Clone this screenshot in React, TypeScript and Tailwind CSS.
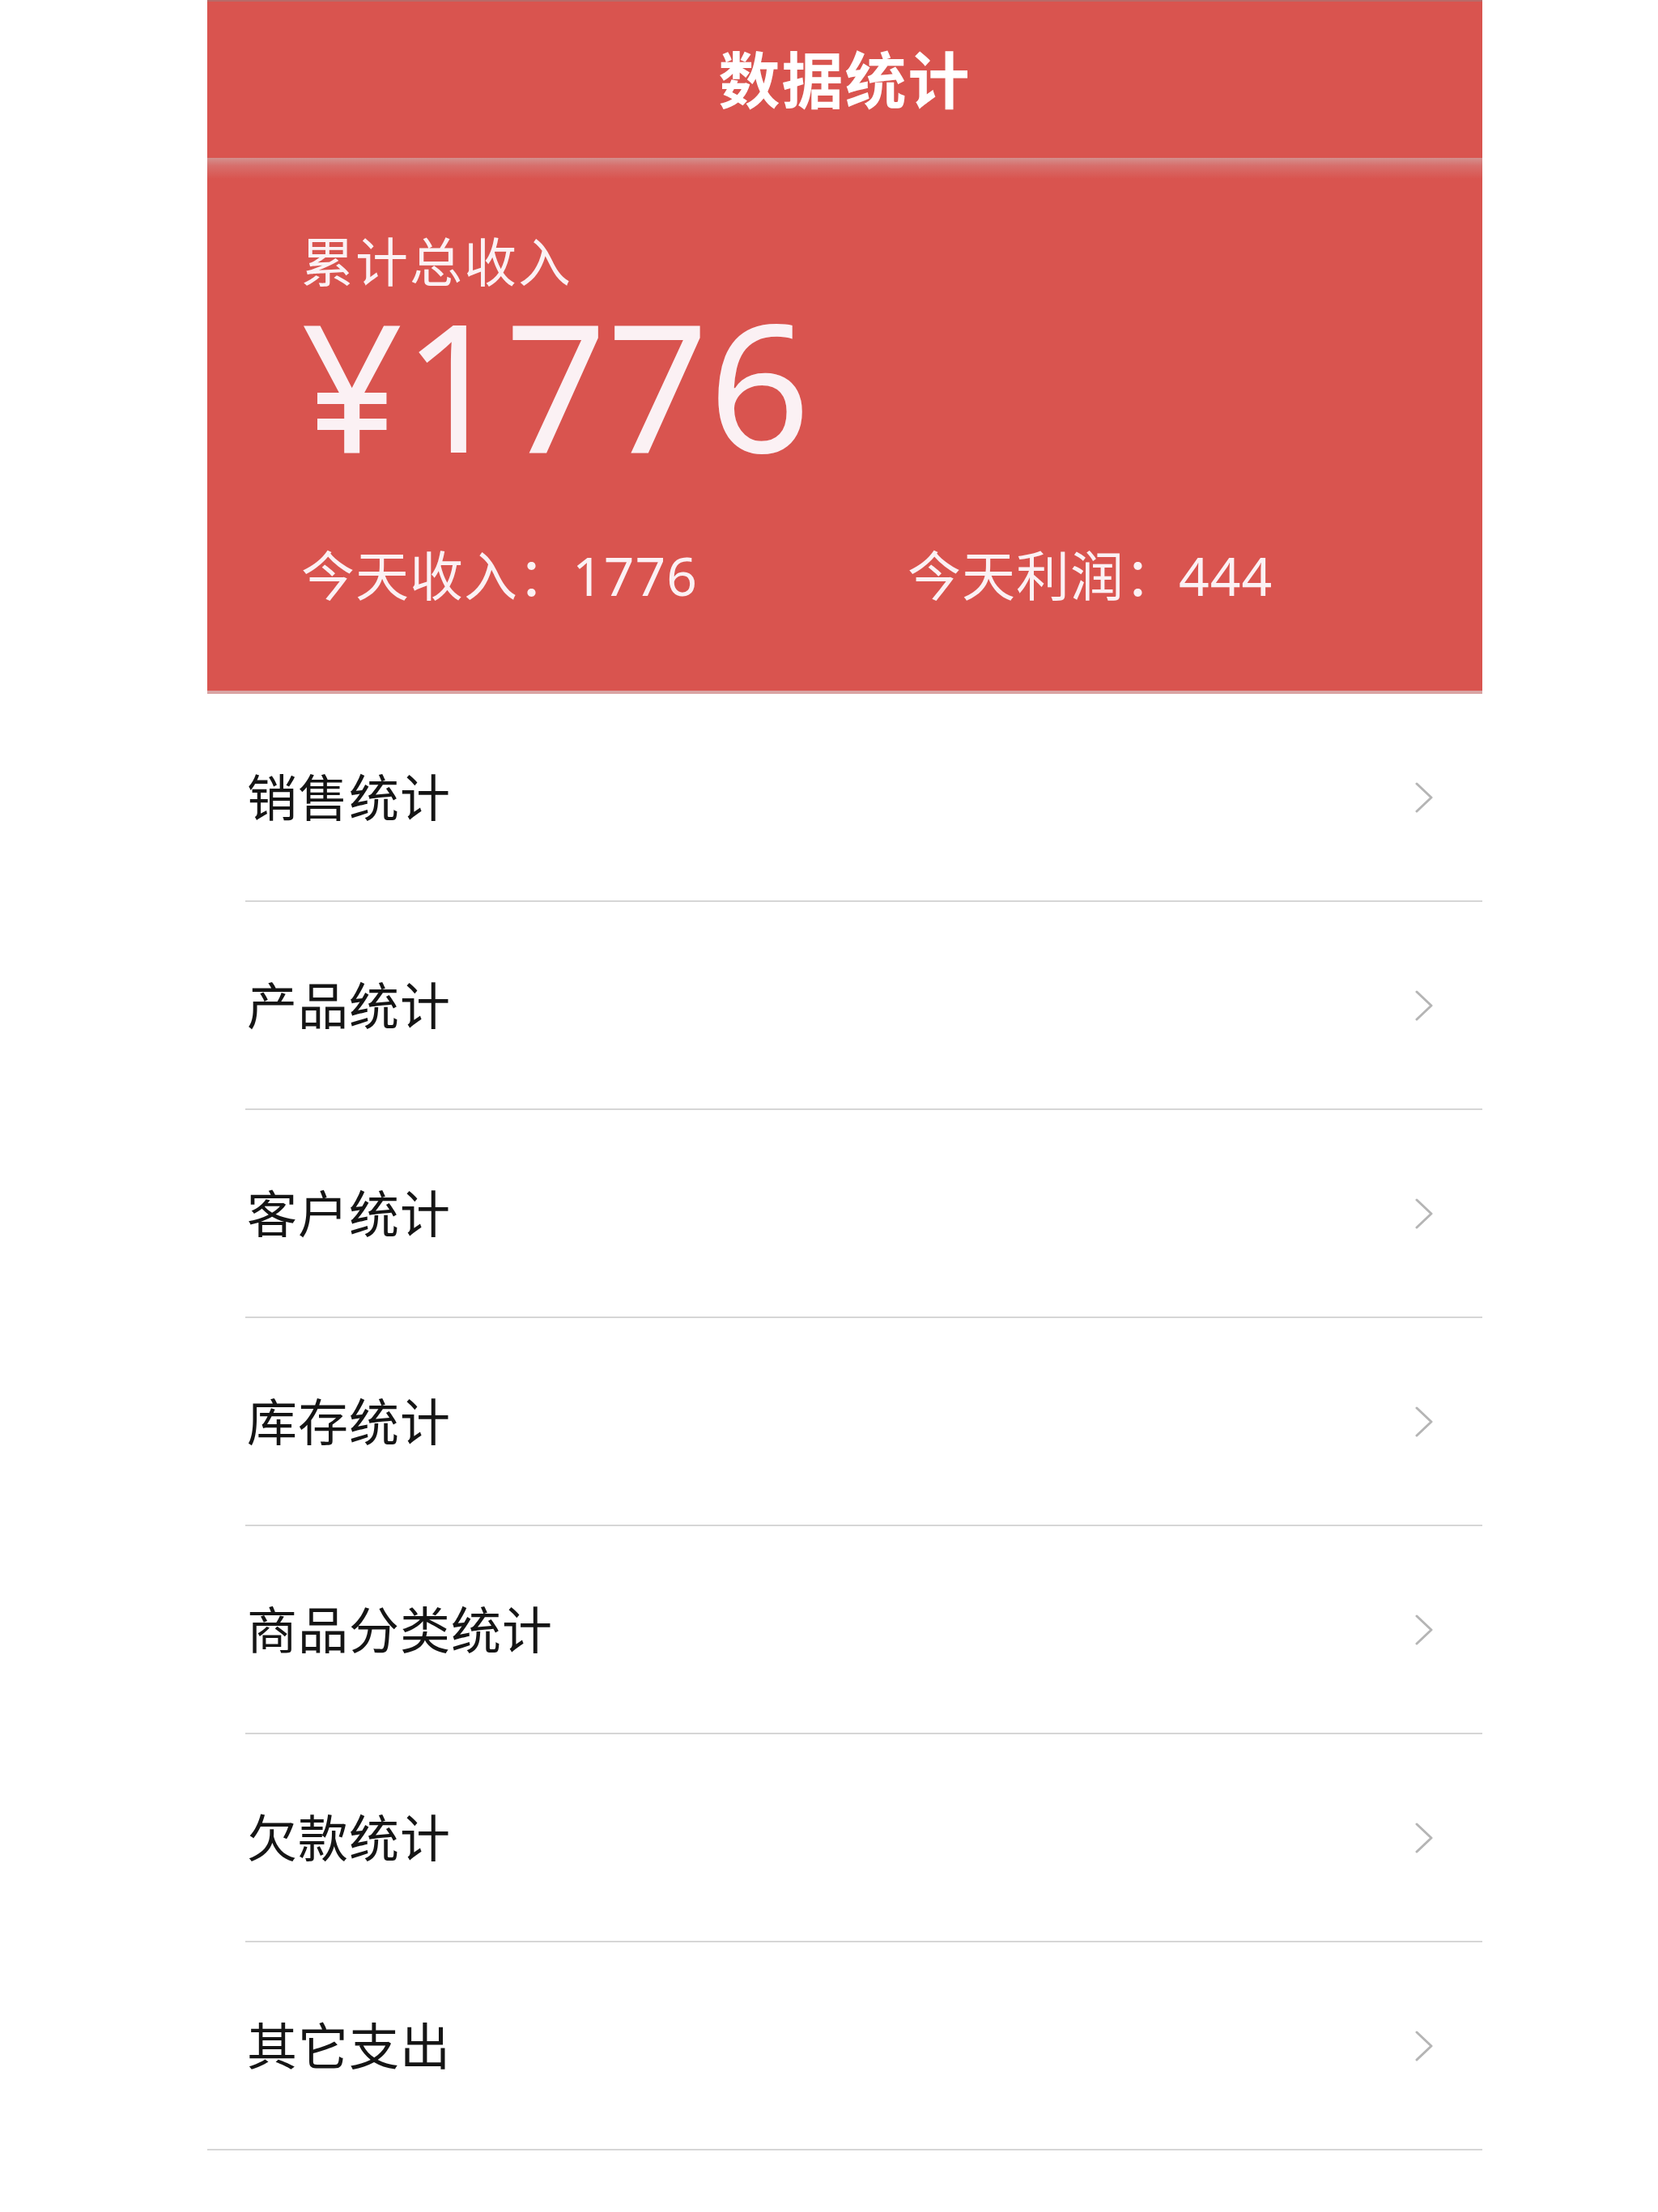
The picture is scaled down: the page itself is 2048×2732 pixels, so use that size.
// 数据统计 · stats overview page
import React from 'react';

const ROWS = ['销售统计', '产品统计', '客户统计', '库存统计', '商品分类统计', '欠款统计', '其它支出'];

const FONT = "font-['Noto_Sans','Noto_Sans_CJK_SC',sans-serif]";

function Chevron() {
  return (
    <svg width="24" height="38" viewBox="0 0 24 38" fill="none" aria-hidden>
      <polyline points="3,2 21,19 3,36" stroke="#b5b5b5" strokeWidth="3" strokeLinecap="round" strokeLinejoin="round" />
    </svg>
  );
}

function Row({ label, last }: { label: string; last: boolean }) {
  return (
    <div className={last ? '' : 'pl-[47px]'}>
      <div
        className={`h-[257px] flex items-center justify-between border-b-2 border-[#d6d6d6] pr-[60px] ${
          last ? 'pl-[49px]' : 'pl-[2px]'
        }`}
      >
        <span className="text-[62px] leading-none tracking-[1px] text-[#151515]">{label}</span>
        <Chevron />
      </div>
    </div>
  );
}

export default function App() {
  return (
    <div className={`w-full min-h-[2732px] bg-white ${FONT}`}>
      <div className="ml-[256px] w-[1575px]">
        <header className="h-[195px] bg-[#d9544f] border-t-2 border-[#b86a68] flex items-center justify-center">
          <h1 className="text-[76px] leading-none font-bold text-white tracking-[2px]">数据统计</h1>
        </header>

        <section className="h-[662px] bg-[linear-gradient(to_bottom,#d3908e_0px,#d76e6b_10px,#d9544f_26px)] border-b-4 border-[#d9a4a3] pl-[116px] pt-[96px] text-[#fbf1f4]">
          <div className="text-[65px] leading-none tracking-[2px]">累计总收入</div>
          <div className="text-[220px] leading-none mt-[8px]">¥1776</div>
          <div className="flex mt-[93px] text-[66px] leading-none tracking-[1px]">
            <span className="w-[749px]">今天收入：1776</span>
            <span>今天利润：444</span>
          </div>
        </section>

        <div>
          {ROWS.map((r, i) => (
            <Row key={r} label={r} last={i === ROWS.length - 1} />
          ))}
        </div>
      </div>
    </div>
  );
}
